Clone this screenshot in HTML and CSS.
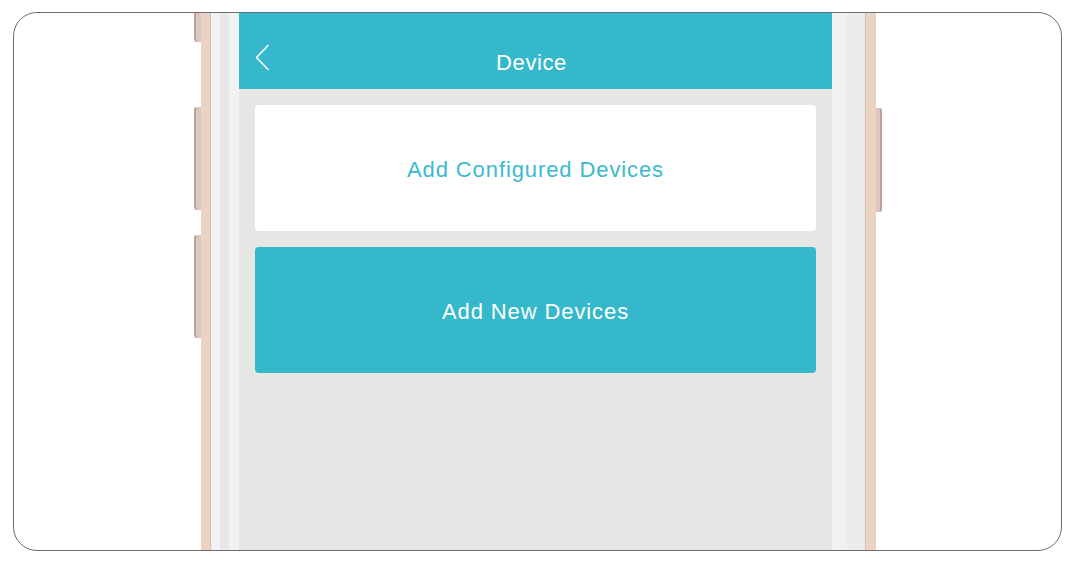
FILE: index.html
```html
<!DOCTYPE html>
<html>
<head>
<meta charset="utf-8">
<link rel="stylesheet" href="styles.css">
</head>
<body>
<div class="frame">
  <div class="phone">
    <div class="rail rail-left">
      <div class="btn btn-mute"></div>
      <div class="btn btn-vol1"></div>
      <div class="btn btn-vol2"></div>
    </div>
    <div class="gold gold-left"></div>
    <div class="bezel b-l1"></div>
    <div class="bezel b-l2"></div>
    <div class="bezel b-l3"></div>
    <div class="screen">
      <div class="header">
        <svg class="back" width="16" height="28" viewBox="0 0 16 28">
          <path d="M14 1.5 L2.5 13.5 L14 25.5" fill="none" stroke="#ffffff" stroke-width="1.6" stroke-linecap="round" stroke-linejoin="round"/>
        </svg>
        <div class="title">Device</div>
      </div>
      <div class="content">
        <div class="card card-white">Add Configured Devices</div>
        <div class="card card-teal">Add New Devices</div>
      </div>
    </div>
    <div class="bezel b-r1"></div>
    <div class="bezel b-r2"></div>
    <div class="gold gold-right"></div>
    <div class="rail rail-right">
      <div class="btn btn-power"></div>
    </div>
  </div>
</div>
</body>
</html>
```

FILE: styles.css
```css
html, body {
  margin: 0;
  padding: 0;
  background: #ffffff;
}
body {
  font-family: "Liberation Sans", Arial, sans-serif;
}
.frame {
  margin: 12px 0 0 13px;
  width: 1049px;
  height: 539px;
  box-sizing: border-box;
  border: 1px solid #6e6e6e;
  border-radius: 24px;
  overflow: hidden;
  background: #ffffff;
}
.phone {
  display: flex;
  height: 100%;
  margin-left: 180px;
}
.rail {
  width: 7px;
  display: flex;
  flex-direction: column;
}
.rail-right {
  width: 6px;
}
.btn {
  background: #dcc6bd;
  box-sizing: border-box;
}
.rail-left .btn {
  border-left: 2px solid #bba298;
  border-radius: 3px 0 0 3px;
}
.rail-right .btn {
  border-right: 2px solid #bba298;
  border-radius: 0 3px 3px 0;
}
.btn-mute {
  height: 29px;
  border-radius: 0 0 0 3px !important;
}
.btn-vol1 {
  margin-top: 65px;
  height: 103px;
}
.btn-vol2 {
  margin-top: 25px;
  height: 103px;
}
.btn-power {
  margin-top: 95px;
  height: 104px;
}
.gold {
  width: 10px;
  box-sizing: border-box;
  background: #ead3c3;
}
.gold-left {
  border-right: 1px solid #d8bfb1;
}
.gold-right {
  width: 11px;
  border-left: 1px solid #d8bfb1;
}
.bezel {
  background: #f0f1f3;
}
.b-l1 { width: 9px; }
.b-l2 { width: 9px; background: #e7e7e7; }
.b-l3 { width: 10px; }
.b-r1 { width: 15px; }
.b-r2 { width: 18px; background: #eaeceb; }
.screen {
  width: 593px;
  background: #e6e6e5;
  display: flex;
  flex-direction: column;
}
.header {
  height: 76px;
  background: #35b8cc;
  display: flex;
  align-items: flex-start;
  justify-content: center;
  padding-top: 36px;
  box-sizing: border-box;
  position: relative;
}
.back {
  position: absolute;
  left: 15px;
  top: 31px;
}
.title {
  color: #ffffff;
  font-size: 22px;
  line-height: 28px;
  letter-spacing: 0.6px;
  margin-left: -8px;
}
.content {
  padding: 16px;
  display: flex;
  flex-direction: column;
  gap: 16px;
}
.card {
  height: 126px;
  box-sizing: border-box;
  padding-top: 3px;
  border-radius: 4px;
  display: flex;
  align-items: center;
  justify-content: center;
  font-size: 22px;
  letter-spacing: 0.9px;
}
.card-white {
  background: #ffffff;
  color: #3bbacd;
}
.card-teal {
  background: #35b8cc;
  color: #ffffff;
}
```
